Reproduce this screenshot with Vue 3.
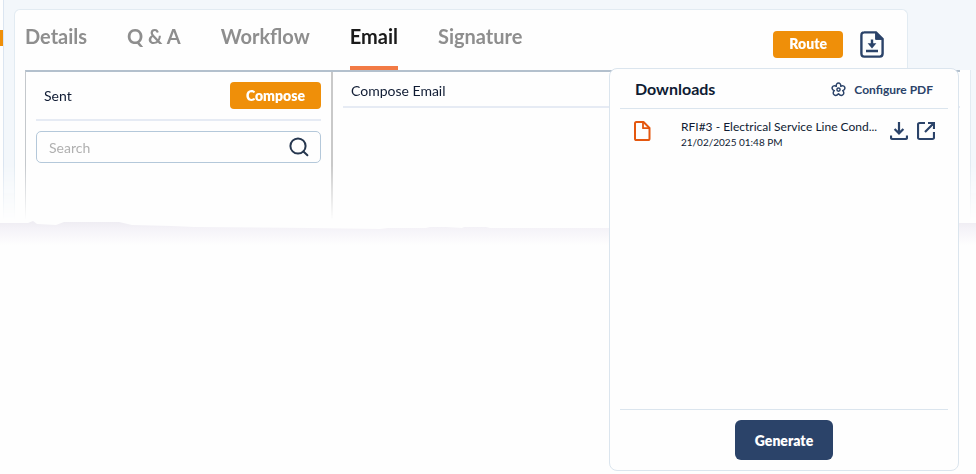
<script setup>
import { ref } from 'vue'

const tabs = ['Details', 'Q & A', 'Workflow', 'Email', 'Signature']
const active = ref('Email')
const query = ref('')
const downloads = [
  { name: 'RFI#3 - Electrical Service Line Cond...', date: '21/02/2025 01:48 PM' },
]
</script>

<template>
  <div class="page">
    <div class="shell">
      <aside class="rail"><span class="rail-mark"></span></aside>
      <main class="main">
        <header class="card">
          <nav class="tabs">
            <a
              v-for="tab in tabs"
              :key="tab"
              href="#"
              class="tab"
              :class="{ active: tab === active }"
              @click.prevent="active = tab"
            >{{ tab }}</a>
          </nav>
          <div class="actions">
            <button type="button" class="btn">Route</button>
            <button type="button" class="icon-btn" aria-label="Downloads">
              <svg width="24" height="27" viewBox="0 0 24 27" fill="none" stroke="#2b4369" stroke-width="2.4">
                <path d="M4 1.4H16L22.6 8V22.6Q22.6 25.6 19.8 25.6H4.2Q1.4 25.6 1.4 22.6V4.4Q1.4 1.4 4.2 1.4Z" />
                <path d="M15.6 1.4V8.4H22.8Z" fill="#2b4369" stroke-width="1" />
                <path d="M12 8.5V15M6 20H18" />
                <path d="M7.6 12.2H16.4L12 17.6Z" fill="#2b4369" stroke="none" />
              </svg>
            </button>
          </div>
        </header>
        <div class="workspace">
          <div class="panes">
            <section class="sent">
              <div class="sent-head">
                <span>Sent</span>
                <button type="button" class="btn">Compose</button>
              </div>
              <div class="search">
                <input v-model="query" type="text" placeholder="Search" aria-label="Search" />
                <svg width="20" height="20" viewBox="0 0 20 20" fill="none" stroke="#26374f" stroke-width="2">
                  <circle cx="9" cy="9" r="7.6" />
                  <path d="M14.4 14.4L18.4 18.2" stroke-linecap="round" />
                </svg>
              </div>
            </section>
            <section class="mail">
              <h2>Compose Email</h2>
            </section>
          </div>
        </div>
      </main>
    </div>

    <svg class="tear" viewBox="0 0 976 28" preserveAspectRatio="none" aria-hidden="true">
      <defs>
        <linearGradient id="tear-fade" x1="0" y1="0" x2="0" y2="1">
          <stop offset="0" stop-color="#eeecf2" />
          <stop offset="0.3" stop-color="#f5f3f8" />
          <stop offset="0.9" stop-color="#fefefe" />
        </linearGradient>
      </defs>
      <path
        fill="url(#tear-fade)"
        d="M0 3L28 3L33 1L37 4L56 5L64 2H119L132 5L172 6L194 7L310 8L380 9L388 8H426L430 7H446L462 8L464 7H486L490 8H700L960 3H976V28H0Z"
      />
    </svg>

    <section class="popup">
      <header class="popup-head">
        <h3>Downloads</h3>
        <a href="#" class="configure" @click.prevent>
          <svg width="15" height="15" viewBox="0 0 15 15" fill="none" stroke="#2b4369" stroke-width="1.5" stroke-linejoin="round">
            <path d="M5.3 4.3C4.6 0 10.4 0 9.7 4.3C13.4 2.2 15.9 7 11.7 8.6C14.8 11.8 10.6 15.4 7.5 11.8C4.4 15.4 0.2 11.8 3.3 8.6C-0.9 7 1.6 2.2 5.3 4.3Z" />
            <circle cx="7.5" cy="7.6" r="1.6" />
          </svg>
          <span>Configure PDF</span>
        </a>
      </header>
      <ul class="list">
        <li v-for="file in downloads" :key="file.name" class="item">
          <svg width="18" height="20" viewBox="0 0 18 20" fill="none" stroke="#e4570f" stroke-width="2" stroke-linejoin="round">
            <path d="M3.4 1H10.5L16.5 7V17.4Q16.5 19 15 19H3.4Q2 19 2 17.4V2.6Q2 1 3.4 1Z" />
            <path d="M10 1V7.2H16.5" stroke-width="1.8" />
          </svg>
          <div class="info">
            <span class="name">{{ file.name }}</span>
            <span class="date">{{ file.date }}</span>
          </div>
          <button type="button" class="icon-btn" aria-label="Download">
            <svg width="18" height="20" viewBox="0 -1 18 20" fill="none" stroke="#2b4369" stroke-width="2.2">
              <path d="M9 0V11M4.6 7L9 11.4L13.4 7M1 13.6V15.6Q1 17 2.4 17H15.6Q17 17 17 15.6V13.6" />
            </svg>
          </button>
          <button type="button" class="icon-btn" aria-label="Open in new window">
            <svg width="18" height="20" viewBox="0 -1 18 20" fill="none" stroke="#2b4369" stroke-width="2.2">
              <path d="M8 1H2.6Q1 1 1 2.6V15.4Q1 17 2.6 17H15.4Q17 17 17 15.4V10M11 1H17V7M17 1L8 10" />
            </svg>
          </button>
        </li>
      </ul>
      <footer class="popup-foot">
        <button type="button" class="generate">Generate</button>
      </footer>
    </section>
  </div>
</template>

<style>
body {
  background: #fefefe;
}
</style>

<style scoped>
.page {
  position: relative;
  min-height: 100vh;
  font-family: Lato, sans-serif;
  font-size: 14px;
  color: #0f1b33;
}

.page * {
  box-sizing: border-box;
}

button {
  font-family: inherit;
  border: 0;
  cursor: pointer;
}

a {
  text-decoration: none;
}

svg {
  display: block;
  flex: none;
}

.shell {
  display: flex;
  min-height: 220px;
  mask-image: linear-gradient(#000 165px, transparent 220px);
}

.rail {
  width: 4px;
  padding-top: 30px;
  border-right: 1px solid #dbe5f1;
}

.rail-mark {
  display: block;
  height: 16px;
  background: #ef8f09;
}

.main {
  flex: 1;
  display: flex;
  flex-direction: column;
  padding: 9px 5px 0 10px;
  background: #f3f7fb;
}

.card {
  display: flex;
  justify-content: space-between;
  margin-right: 63px;
  height: 61px;
  padding: 0 23px 0 10px;
  background: #fefefe;
  border: 1px solid #e2ebf2;
  border-bottom: 0;
  border-radius: 6px 6px 0 0;
}

.tabs {
  display: flex;
  gap: 40px;
}

.tab {
  padding-top: 14px;
  font-size: 20px;
  font-weight: 700;
  line-height: 24px;
  color: #8e8e8e;
  border-bottom: 4px solid transparent;
}

.tab.active {
  color: #1b1b1b;
  border-color: #f27a45;
}

.actions {
  display: flex;
  align-items: center;
  gap: 17px;
  padding-top: 8px;
}

.btn {
  height: 27px;
  padding: 0 16px;
  font-size: 14px;
  font-weight: 800;
  line-height: 20px;
  color: #fff;
  background: #ef8f09;
  border-radius: 4px;
}

.icon-btn {
  padding: 0;
  background: none;
}

.workspace {
  flex: 1;
  display: flex;
  padding: 0 10px;
  background: #fefefe;
  border-left: 1px solid #e2ebf2;
  border-right: 1px solid #e2ebf2;
}

.panes {
  flex: 1;
  display: grid;
  grid-template-columns: 307px 1fr;
  border-top: 2px solid #b3c0cd;
  border-left: 1px solid #c4c8cc;
}

.sent {
  padding: 0 10px;
  border-right: 2px solid #c9c9c9;
}

.sent-head {
  display: flex;
  align-items: center;
  justify-content: space-between;
  height: 49px;
  padding-left: 8px;
  border-bottom: 2px solid #e6ebf4;
}

.search {
  display: flex;
  align-items: center;
  height: 32px;
  margin-top: 10px;
  padding: 0 11px 0 12px;
  border: 1px solid #b4c8da;
  border-radius: 5px;
}

.search input {
  flex: 1;
  min-width: 0;
  padding: 0;
  font-family: inherit;
  font-size: 14px;
  color: inherit;
  background: none;
  border: 0;
  outline: 0;
}

.search input::placeholder {
  color: #b0b0b0;
}

.mail {
  padding-left: 10px;
}

.mail h2 {
  margin: 0;
  padding: 8px;
  height: 36px;
  font-size: 14px;
  font-weight: 400;
  line-height: 22px;
  border-bottom: 2px solid #e6ebf4;
}

.tear {
  width: 100%;
  height: 28px;
}

.popup {
  position: absolute;
  top: 68px;
  right: 17px;
  width: 350px;
  padding: 0 10px;
  background: #fefefe;
  border: 1px solid #dbe5ee;
  border-radius: 8px;
}

.popup-head {
  display: flex;
  align-items: center;
  justify-content: space-between;
  height: 40px;
  padding: 0 15px;
  border-bottom: 1px solid #dbe5ee;
}

.popup-head h3 {
  margin: 0;
  font-size: 16px;
  font-weight: 700;
  line-height: 20px;
}

.configure {
  display: flex;
  align-items: center;
  gap: 8px;
  padding-top: 2px;
  font-size: 12px;
  font-weight: 700;
  color: #2b4369;
}

.list {
  min-height: 300px;
  margin: 0;
  padding: 12px 13px;
  list-style: none;
}

.item {
  display: flex;
  align-items: flex-start;
  gap: 9px;
}

.info {
  flex: 1;
  display: flex;
  flex-direction: column;
  margin: -3px 0 0 21px;
}

.name {
  font-size: 12px;
  line-height: 18px;
  white-space: nowrap;
}

.date {
  font-size: 10px;
  line-height: 13px;
}

.popup-foot {
  display: flex;
  justify-content: center;
  padding: 10px 0;
  border-top: 1px solid #dbe5ee;
}

.generate {
  height: 40px;
  padding: 0 20px;
  font-size: 14px;
  font-weight: 800;
  color: #fff;
  background: #2b4369;
  border-radius: 6px;
}
</style>
